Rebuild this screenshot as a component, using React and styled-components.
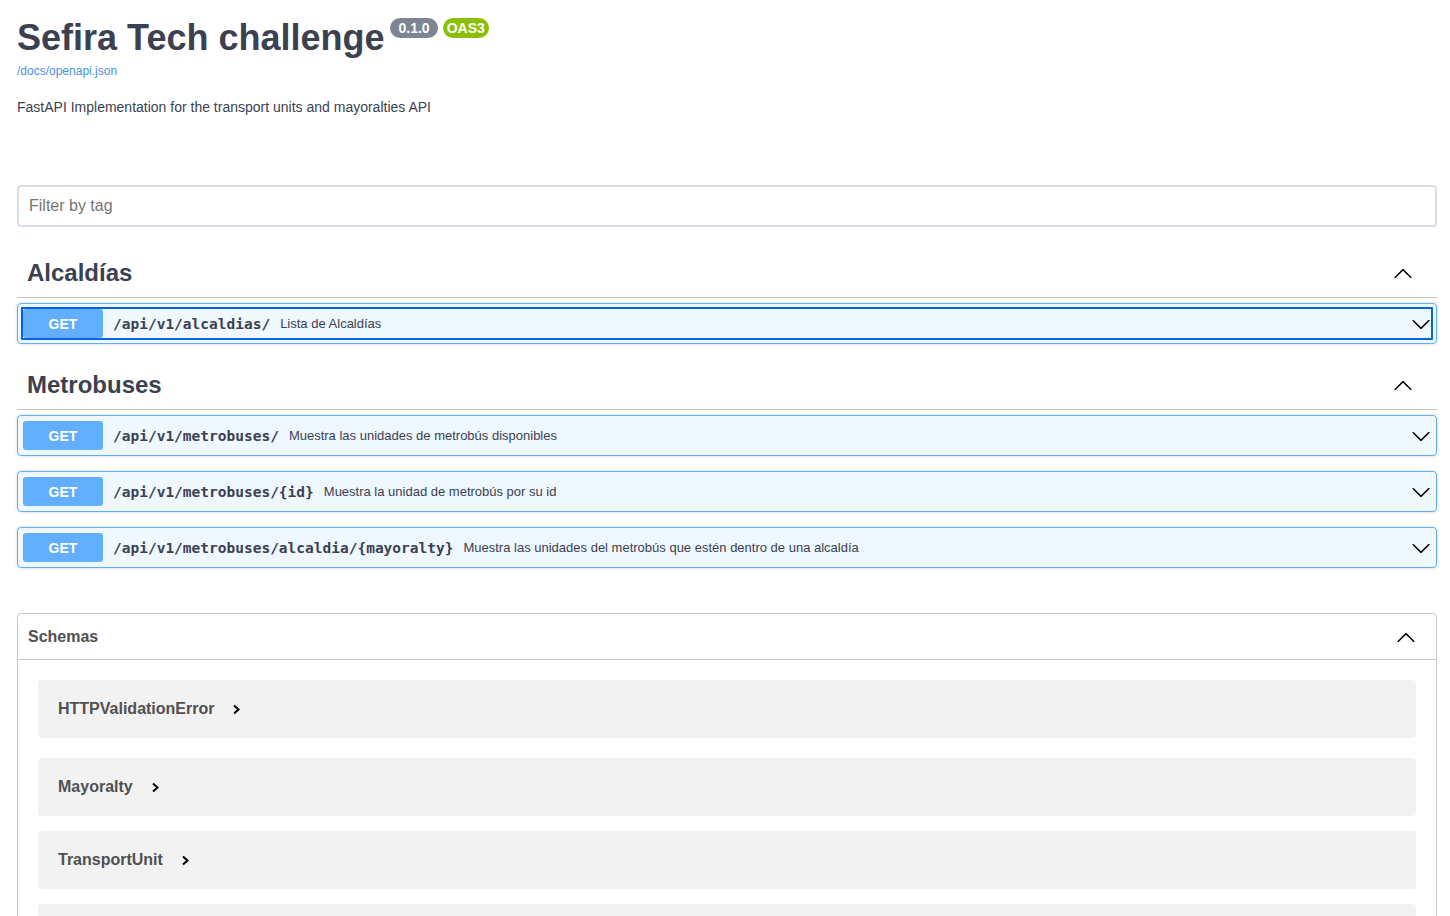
import React from "react";
import styled, { createGlobalStyle } from "styled-components";

const GlobalStyle = createGlobalStyle`
  body {
    margin: 0;
    background: #fff;
    font-family: "Liberation Sans", Arial, sans-serif;
    color: #3b4151;
  }
`;

const ArrowDown = () => (
  <svg width="20" height="20" viewBox="0 0 20 20">
    <path d="M17.418 6.109c.272-.268.709-.268.979 0s.271.701 0 .969l-7.908 7.83c-.27.268-.707.268-.979 0l-7.908-7.83c-.27-.268-.27-.701 0-.969.271-.268.709-.268.979 0L10 13.25l7.418-7.141z" fill="#000" />
  </svg>
);

const ArrowUp = () => (
  <svg width="20" height="20" viewBox="0 0 20 20">
    <path d="M17.418 14.908c.272.268.709.268.979 0s.271-.701 0-.969l-7.908-7.83c-.27-.268-.707-.268-.979 0l-7.908 7.83c-.27.268-.27.701 0 .969.271.268.709.268.979 0L10 7.767l7.418 7.141z" fill="#000" />
  </svg>
);

const ChevronRight = () => (
  <svg width="9" height="11" viewBox="0 0 9 11">
    <path d="M2 1.5L6.5 5.5L2 9.5" fill="none" stroke="#000" strokeWidth="2" />
  </svg>
);

const operations = {
  alcaldias: [
    { path: "/api/v1/alcaldias/", summary: "Lista de Alcaldías", focused: true },
  ],
  metrobuses: [
    { path: "/api/v1/metrobuses/", summary: "Muestra las unidades de metrobús disponibles" },
    { path: "/api/v1/metrobuses/{id}", summary: "Muestra la unidad de metrobús por su id" },
    {
      path: "/api/v1/metrobuses/alcaldia/{mayoralty}",
      summary: "Muestra las unidades del metrobús que estén dentro de una alcaldía",
    },
  ],
};

const schemas = ["HTTPValidationError", "Mayoralty", "TransportUnit", "ValidationError"];

export default function App() {
  return (
    <>
      <GlobalStyle />
      <Wrapper>
        <Info>
          <TitleRow>
            <Title>Sefira Tech challenge</Title>
            <Badge $bg="#7d8492" $pad="8px">0.1.0</Badge>
            <Badge $bg="#89bf04" $pad="4px">OAS3</Badge>
          </TitleRow>
          <SpecLink>/docs/openapi.json</SpecLink>
          <Description>FastAPI Implementation for the transport units and mayoralties API</Description>
        </Info>

        <Filter placeholder="Filter by tag" />

        <TagSection>
          <TagHeading>
            <span>Alcaldías</span>
            <ArrowUp />
          </TagHeading>
          {operations.alcaldias.map((op) => (
            <Operation key={op.path} {...op} />
          ))}
        </TagSection>

        <TagSection>
          <TagHeading>
            <span>Metrobuses</span>
            <ArrowUp />
          </TagHeading>
          {operations.metrobuses.map((op) => (
            <Operation key={op.path} {...op} />
          ))}
        </TagSection>

        <Models>
          <ModelsHeader>
            <span>Schemas</span>
            <ArrowUp />
          </ModelsHeader>
          <ModelsBody>
            {schemas.map((name, i) => (
              <ModelBox key={name} $first={i === 0}>
                <ModelTitle>{name}</ModelTitle>
                <ChevronRight />
              </ModelBox>
            ))}
          </ModelsBody>
        </Models>
      </Wrapper>
    </>
  );
}

function Operation({ path, summary, focused }) {
  return (
    <OpBlock>
      <OpSummary $focused={focused}>
        <Method>GET</Method>
        <Path>{path}</Path>
        <Summary>{summary}</Summary>
        <ArrowDown />
      </OpSummary>
    </OpBlock>
  );
}

const Wrapper = styled.div`
  padding: 0 13px 0 17px;
`;

const Info = styled.div`
  padding-top: 17px;
  margin-bottom: 69px;
`;

const TitleRow = styled.div`
  display: flex;
  align-items: flex-start;
  gap: 5px;
`;

const Title = styled.h2`
  margin: 0 1px 0 0;
  font-size: 36px;
  line-height: 41px;
  font-weight: 700;
  color: #3b4151;
`;

const Badge = styled.span`
  margin-top: 1px;
  background: ${(p) => p.$bg};
  color: #fff;
  font-size: 14px;
  font-weight: 700;
  line-height: 20px;
  padding: 0 ${(p) => p.$pad};
  border-radius: 57px;
`;

const SpecLink = styled.a`
  display: block;
  margin-top: 6px;
  font-size: 12px;
  color: #4990e2;
`;

const Description = styled.p`
  margin: 20px 0 0;
  font-size: 14px;
  line-height: 18px;
  color: #3b4151;
`;

const Filter = styled.input`
  display: block;
  box-sizing: border-box;
  width: 100%;
  height: 42px;
  margin: 0 0 22px;
  padding: 8px 10px;
  border: 2px solid #d8dde7;
  border-radius: 4px;
  font-family: "Liberation Sans", Arial, sans-serif;
  font-size: 16px;
  color: #3b4151;
  outline: none;
  &::placeholder {
    color: #757575;
  }
`;

const TagSection = styled.div`
  margin-bottom: 17px;
`;

const TagHeading = styled.h3`
  display: flex;
  align-items: center;
  justify-content: space-between;
  margin: 0 0 5px;
  padding: 10px 24px 10px 10px;
  font-size: 24px;
  line-height: 28px;
  font-weight: 700;
  color: #3b4151;
  border-bottom: 1px solid rgba(59, 65, 81, 0.3);
`;

const OpBlock = styled.div`
  margin-bottom: 15px;
  border: 1px solid #61affe;
  border-radius: 4px;
  background: rgba(97, 175, 254, 0.1);
  box-shadow: 0 0 3px rgba(0, 0, 0, 0.19);
`;

const OpSummary = styled.div`
  display: flex;
  align-items: center;
  height: 39px;
  box-sizing: border-box;
  padding: 5px;
  ${(p) =>
    p.$focused &&
    `outline: 2px solid #0064e1; outline-offset: -5px; border-radius: 4px;`}
  svg {
    margin-left: auto;
  }
`;

const Method = styled.span`
  display: flex;
  align-items: center;
  justify-content: center;
  box-sizing: border-box;
  min-width: 80px;
  height: 29px;
  border-radius: 3px;
  background: #61affe;
  color: #fff;
  font-size: 14px;
  font-weight: 700;
`;

const Path = styled.span`
  padding: 0 10px;
  font-family: "DejaVu Sans Mono", "Liberation Mono", monospace;
  font-size: 14.5px;
  font-weight: 700;
  color: #3b4151;
`;

const Summary = styled.span`
  font-size: 13px;
  color: #3b4151;
`;

const Models = styled.section`
  margin-top: 45px;
  border: 1px solid rgba(59, 65, 81, 0.3);
  border-radius: 4px;
`;

const ModelsHeader = styled.h4`
  display: flex;
  align-items: center;
  justify-content: space-between;
  margin: 0;
  padding: 10px 20px 10px 10px;
  font-size: 16px;
  line-height: 25px;
  font-weight: 700;
  color: #505050;
  border-bottom: 1px solid rgba(59, 65, 81, 0.3);
`;

const ModelsBody = styled.div`
  padding: 20px 20px 0;
`;

const ModelBox = styled.div`
  display: flex;
  align-items: center;
  gap: 18px;
  height: 58px;
  margin-bottom: ${(p) => (p.$first ? "20px" : "15px")};
  padding: 0 20px;
  border-radius: 4px;
  background: rgba(0, 0, 0, 0.05);
`;

const ModelTitle = styled.span`
  font-size: 16px;
  font-weight: 700;
  color: #505050;
`;
